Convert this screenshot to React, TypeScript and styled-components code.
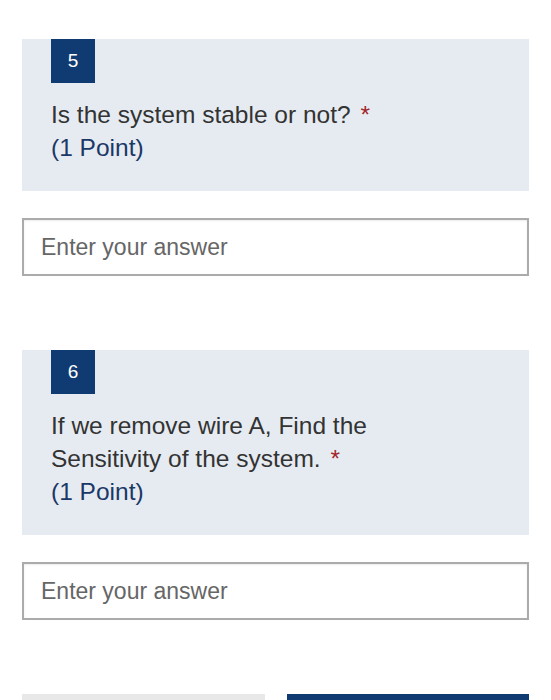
import React from "react";
import styled, { createGlobalStyle } from "styled-components";

const GlobalStyle = createGlobalStyle`
  html, body {
    margin: 0;
    padding: 0;
    background: #ffffff;
  }
  body {
    font-family: "Liberation Sans", Arial, Helvetica, sans-serif;
    -webkit-font-smoothing: antialiased;
  }
  * { box-sizing: border-box; }
`;

const Page = styled.main`
  display: flex;
  flex-direction: column;
  padding: 39px 22px 0;
`;

const Question = styled.section<{ $first?: boolean }>`
  display: flex;
  flex-direction: column;
  margin-top: ${(p) => (p.$first ? "0" : "74px")};
`;

const Card = styled.div`
  display: flex;
  flex-direction: column;
  align-items: flex-start;
  background: #e6ebf2;
  padding: 0 29px 27px;
`;

const Badge = styled.div`
  display: flex;
  align-items: center;
  justify-content: center;
  width: 44px;
  height: 44px;
  background: #0f3b72;
  color: #ffffff;
  font-size: 19px;
`;

const Title = styled.div`
  margin-top: 15px;
  max-width: 400px;
  font-size: 24.5px;
  line-height: 33px;
  color: #333333;
`;

const Required = styled.span`
  color: #a4262c;
  margin-left: 10px;
`;

const Points = styled.div`
  color: #1b3866;
`;

const AnswerInput = styled.input`
  margin-top: 27px;
  width: 100%;
  height: 58px;
  border: 2px solid #ababab;
  box-shadow: inset 0 1px 2px rgba(0, 0, 0, 0.08);
  padding: 0 17px;
  font-family: inherit;
  font-size: 23px;
  color: #333333;
  background: #ffffff;
  outline: none;
  &::placeholder {
    color: #666666;
  }
`;

const ButtonRow = styled.div`
  display: grid;
  grid-template-columns: 1fr 1fr;
  gap: 22px;
  margin-top: 74px;
`;

const Button = styled.button<{ $primary?: boolean }>`
  height: 52px;
  border: none;
  font-family: inherit;
  font-size: 20px;
  background: ${(p) => (p.$primary ? "#0f3b72" : "#e8e8e8")};
  color: ${(p) => (p.$primary ? "#ffffff" : "#333333")};
`;

type Q = { n: number; text: string; points: string };

const questions: Q[] = [
  { n: 5, text: "Is the system stable or not?", points: "(1 Point)" },
  {
    n: 6,
    text: "If we remove wire A, Find the Sensitivity of the system.",
    points: "(1 Point)",
  },
];

export default function App() {
  return (
    <>
      <GlobalStyle />
      <Page>
        {questions.map((q, i) => (
          <Question key={q.n} $first={i === 0}>
            <Card>
              <Badge>{q.n}</Badge>
              <Title>
                {q.text}
                <Required>*</Required>
                <Points>{q.points}</Points>
              </Title>
            </Card>
            <AnswerInput placeholder="Enter your answer" />
          </Question>
        ))}
        <ButtonRow>
          <Button>Back</Button>
          <Button $primary>Next</Button>
        </ButtonRow>
      </Page>
    </>
  );
}
